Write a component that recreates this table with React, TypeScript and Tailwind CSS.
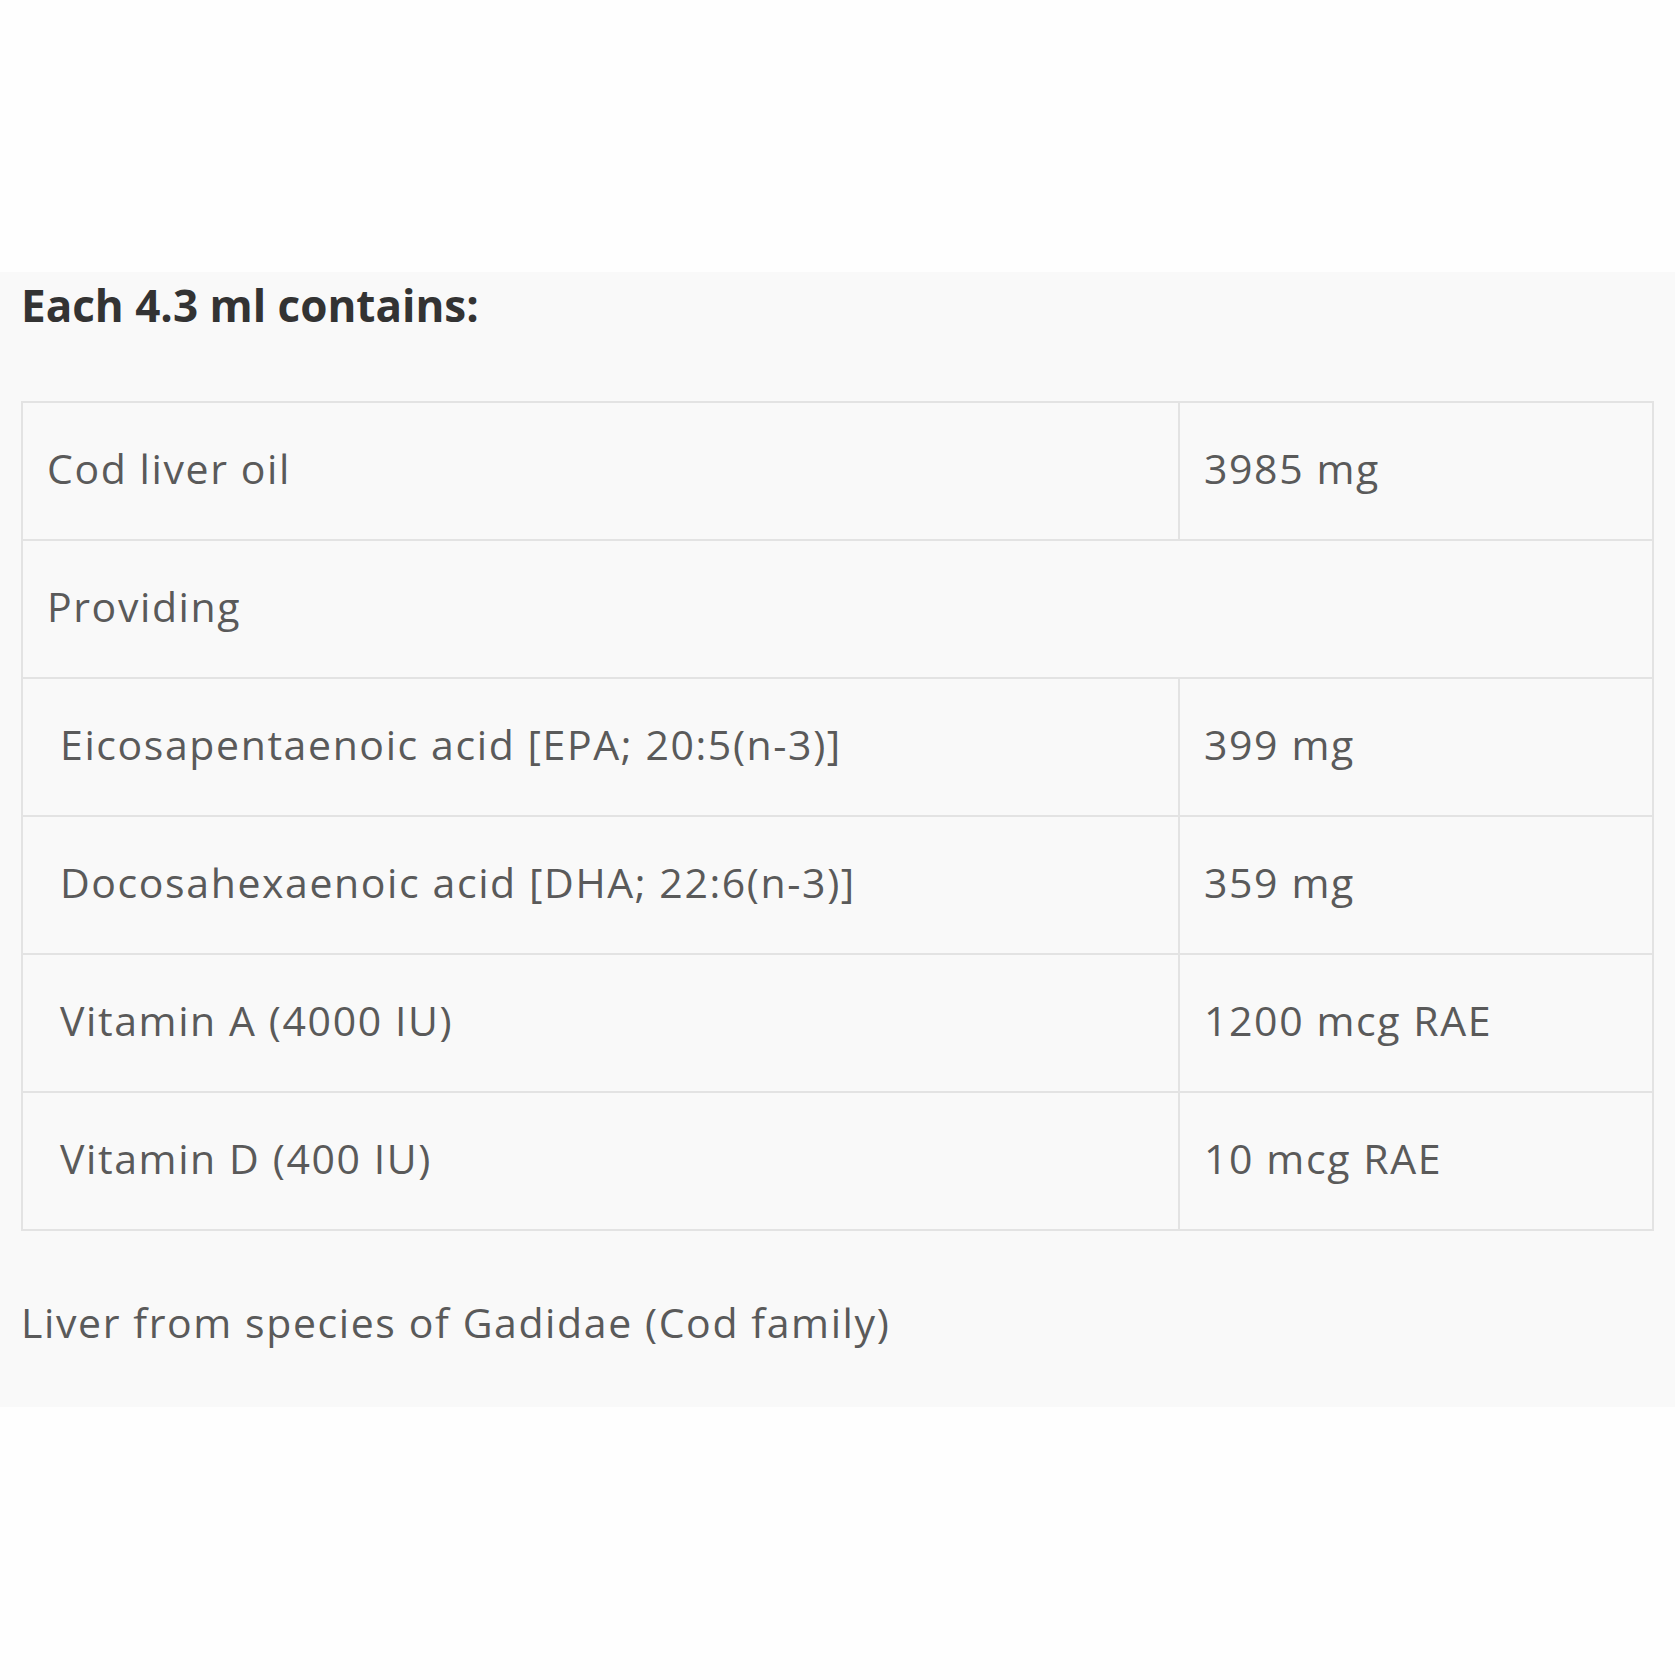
import React from "react";

const rows: { name: string; value?: string; indent?: boolean; span?: boolean }[] = [
  { name: "Cod liver oil", value: "3985 mg" },
  { name: "Providing", span: true },
  { name: "Eicosapentaenoic acid [EPA; 20:5(n-3)]", value: "399 mg", indent: true },
  { name: "Docosahexaenoic acid [DHA; 22:6(n-3)]", value: "359 mg", indent: true },
  { name: "Vitamin A (4000 IU)", value: "1200 mcg RAE", indent: true },
  { name: "Vitamin D (400 IU)", value: "10 mcg RAE", indent: true },
];

export default function App() {
  return (
    <div
      className="min-h-[1680px] w-full bg-[#fefefe] pt-[272px]"
      style={{ fontFamily: '"Open Sans", "Liberation Sans", sans-serif' }}
    >
      <div className="h-[1135px] w-[1675px] bg-[#f9f9f9] pl-[21px] pt-[11px]">
        <h2 className="text-[44px] font-bold leading-[44px] text-[#333333]">
          Each 4.3 ml contains:
        </h2>
        <table className="mt-[74px] w-[1633px] border-collapse text-[41px] tracking-[1.6px] text-[#5a5a5a]">
          <tbody>
            {rows.map((r) => (
              <tr key={r.name} className="h-[138px]">
                {r.span ? (
                  <td colSpan={2} className="border-2 border-[#e3e3e3] pl-[24px] pb-[4px] align-middle">
                    {r.name}
                  </td>
                ) : (
                  <>
                    <td
                      className={`w-[1157px] border-2 border-[#e3e3e3] pb-[4px] align-middle ${
                        r.indent ? "pl-[37px]" : "pl-[24px]"
                      }`}
                    >
                      {r.name}
                    </td>
                    <td className="border-2 border-[#e3e3e3] pl-[24px] pb-[4px] align-middle">{r.value}</td>
                  </>
                )}
              </tr>
            ))}
          </tbody>
        </table>
        <p className="mt-[63px] text-[41px] leading-[56px] tracking-[1.6px] text-[#5a5a5a]">
          Liver from species of Gadidae (Cod family)
        </p>
      </div>
    </div>
  );
}
